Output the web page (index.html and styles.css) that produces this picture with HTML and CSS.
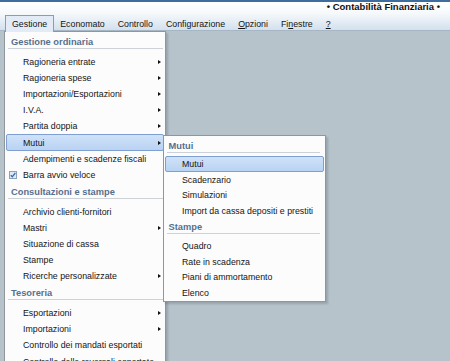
FILE: index.html
```html
<!DOCTYPE html>
<html lang="it">
<head>
  <meta charset="UTF-8">
  <title>Contabilità Finanziaria</title>
  <link rel="stylesheet" href="styles.css">
</head>
<body>

  <div class="topbar">
    <div class="apptitle">&bull; Contabilità Finanziaria &bull;</div>
    <div class="menubar">
      <span class="mb-item active">Gestione</span>
      <span class="mb-item">Economato</span>
      <span class="mb-item">Controllo</span>
      <span class="mb-item">Configurazione</span>
      <span class="mb-item"><u>O</u>pzioni</span>
      <span class="mb-item">Fi<u>n</u>estre</span>
      <span class="mb-item"><u>?</u></span>
    </div>
  </div>

  <div class="menu main-menu">
    <div class="group">Gestione ordinaria</div>
    <div class="item sub">Ragioneria entrate<span class="arrow"></span></div>
    <div class="item sub">Ragioneria spese<span class="arrow"></span></div>
    <div class="item sub">Importazioni/Esportazioni<span class="arrow"></span></div>
    <div class="item sub">I.V.A.<span class="arrow"></span></div>
    <div class="item sub">Partita doppia<span class="arrow"></span></div>
    <div class="item sub hl">Mutui<span class="arrow"></span></div>
    <div class="item">Adempimenti e scadenze fiscali</div>
    <div class="item checked">
      <svg class="check" width="8" height="8" viewBox="0 0 8 8">
        <rect x="0.5" y="0.5" width="7" height="7" fill="#dfe9f4" stroke="#8aa2bd"/>
        <path d="M1.8 4.2 L3.3 5.8 L6.3 2" fill="none" stroke="#3a6aa8" stroke-width="1.3"/>
      </svg>Barra avvio veloce
    </div>

    <div class="group">Consultazioni e stampe</div>
    <div class="item">Archivio clienti-fornitori</div>
    <div class="item sub">Mastri<span class="arrow"></span></div>
    <div class="item">Situazione di cassa</div>
    <div class="item">Stampe</div>
    <div class="item sub">Ricerche personalizzate<span class="arrow"></span></div>

    <div class="group">Tesoreria</div>
    <div class="item sub">Esportazioni<span class="arrow"></span></div>
    <div class="item sub">Importazioni<span class="arrow"></span></div>
    <div class="item">Controllo dei mandati esportati</div>
    <div class="item">Controllo delle reversali esportate</div>
  </div>

  <div class="menu sub-menu">
    <div class="group">Mutui</div>
    <div class="item hl">Mutui</div>
    <div class="item">Scadenzario</div>
    <div class="item">Simulazioni</div>
    <div class="item">Import da cassa depositi e prestiti</div>

    <div class="group">Stampe</div>
    <div class="item">Quadro</div>
    <div class="item">Rate in scadenza</div>
    <div class="item">Piani di ammortamento</div>
    <div class="item">Elenco</div>
  </div>

</body>
</html>
```

FILE: styles.css
```css
html, body {
  height: 361px;
  overflow: hidden;
}
body {
  margin: 0;
  background-color: #b7c3cb;
  font-family: "Liberation Sans", Arial, sans-serif;
  font-size: 8.8px;
  color: #141414;
  position: relative;
}

/* title + menu bar */
.topbar {
  border-top: 2px solid #3d6c9e;
  border-bottom: 1px solid #a7b6c4;
  height: 28px;
  background: linear-gradient(#ffffff 0%, #f6f9fc 40%, #d3e0ed 100%);
}
.apptitle {
  height: 10px;
  line-height: 10px;
  text-align: right;
  padding-right: 10px;
  font-size: 9.5px;
  font-weight: bold;
  color: #111;
}
.menubar {
  display: flex;
  margin-top: 3px;
  padding-left: 5px;
}
.mb-item {
  height: 16px;
  line-height: 17px;
  padding: 0 6px;
  border: 1px solid transparent;
  border-bottom: none;
  margin-right: -1px;
}
.mb-item.active {
  border-color: #7e9fc8;
  background: #e3ecf6;
  position: relative;
  z-index: 3;
}

/* dropdowns */
.menu {
  position: absolute;
  background: #fcfcfc;
  border: 1px solid #8f969c;
  box-shadow: 2px 2px 2px rgba(60, 70, 80, 0.25);
}
.main-menu {
  left: 4px;
  top: 31px;
  width: 160px;
  padding-top: 1px;
  z-index: 1;
}
.sub-menu {
  left: 163px;
  top: 135px;
  width: 161px;
  padding: 0.7px 0 0.5px;
  z-index: 2;
}

.group {
  font-size: 9.3px;
  font-weight: bold;
  color: #56708f;
  line-height: 12px;
  padding: 3px 0 0 3px;
  margin: 0 2px 5px 3px;
  border-bottom: 1px solid #cdd2d8;
}
.item {
  display: flex;
  align-items: center;
  height: 14.1px;
  margin: 0 1px;
  padding: 0 2px 0 16px;
  border: 1px solid transparent;
  border-radius: 2px;
  white-space: nowrap;
}
.item.hl {
  background: linear-gradient(#cfe2f8, #b9d3f3);
  border-color: #7e9fcf;
}
.item.checked {
  padding-left: 2px;
}
.check {
  margin-right: 6px;
}
.arrow {
  margin-left: auto;
  width: 0;
  height: 0;
  border-top: 2.5px solid transparent;
  border-bottom: 2.5px solid transparent;
  border-left: 3px solid #111;
}

.sub-menu .group {
  padding-left: 1.5px;
  margin: 0 5px 3.8px 3px;
}
.sub-menu .item {
  height: 13.5px;
}
```
